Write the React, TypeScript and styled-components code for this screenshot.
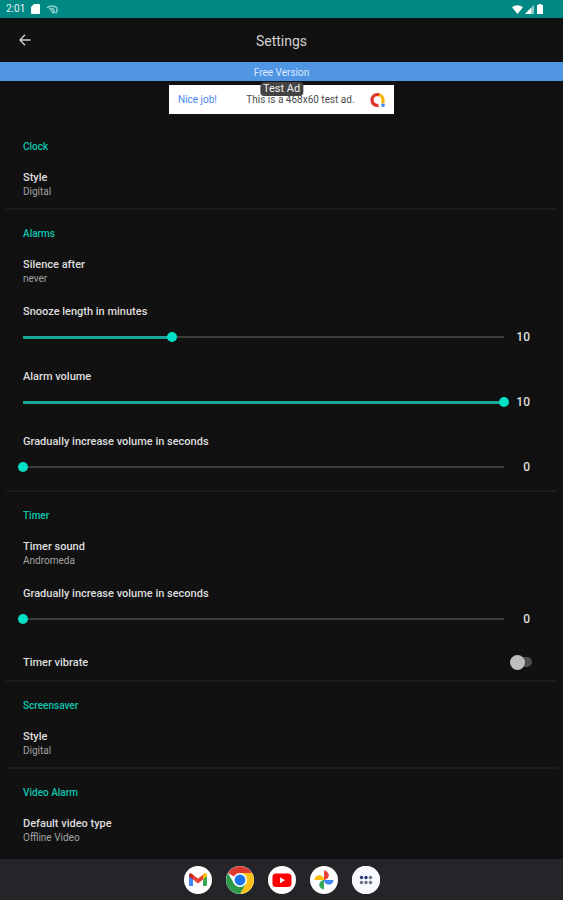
import React, { useId, useState } from "react";
import styled, { createGlobalStyle } from "styled-components";

const GlobalStyle = createGlobalStyle`
  * { box-sizing: border-box; }
  body {
    margin: 0;
    background: #111111;
    color: #dedede;
    font-family: Roboto, "Liberation Sans", sans-serif;
  }
  button, input { font: inherit; color: inherit; }
`;

const Page = styled.div`
  display: flex;
  flex-direction: column;
  min-height: 100vh;
`;

const StatusBar = styled.div`
  display: flex;
  align-items: center;
  justify-content: space-between;
  height: 18px;
  padding: 0 19px 0 6px;
  background: #008885;
  color: #e4f4f3;
  font-size: 10px;
  line-height: 18px;
`;

const StatusGroup = styled.div<{ $gap: number }>`
  display: flex;
  align-items: center;
  gap: ${(p) => p.$gap}px;
  svg { display: block; }
`;

const AppBar = styled.header`
  display: grid;
  grid-template-columns: 50px 1fr 50px;
  align-items: center;
  height: 44px;
  padding-top: 2px;
`;

const BackButton = styled.button`
  display: flex;
  align-items: center;
  justify-content: center;
  height: 40px;
  padding: 0 0 2px;
  border: 0;
  background: none;
  cursor: pointer;
`;

const Title = styled.h1`
  margin: 0;
  font-size: 14px;
  font-weight: 400;
  line-height: 20px;
  text-align: center;
  color: #d2d2d2;
`;

const Banner = styled.div`
  height: 19px;
  background: #5094e4;
  color: #dceaff;
  font-size: 10px;
  line-height: 21px;
  text-align: center;
`;

const Ad = styled.a`
  position: relative;
  display: flex;
  align-items: center;
  justify-content: space-between;
  width: 225px;
  height: 29px;
  margin: 4px auto 0;
  padding: 0 8px 0 9px;
  background: #ffffff;
  color: #4c4c4c;
  font-size: 10px;
  line-height: 14px;
  text-decoration: none;
`;

const AdLead = styled.span`
  color: #4285f4;
  margin-right: 14px;
`;

const AdTag = styled.span`
  position: absolute;
  top: -3px;
  left: 50%;
  transform: translateX(-50%);
  padding: 0 3px;
  border-radius: 4px;
  background: #444444;
  color: #f0f0f0;
  font-size: 11px;
  line-height: 14px;
  white-space: nowrap;
`;

const List = styled.main`
  flex: 1;
  padding-top: 9px;
`;

const Section = styled.section`
  padding-top: 16px;
`;

const Divider = styled.hr`
  height: 2px;
  margin: 0 6px;
  border: 0;
  background: #1c1c1c;
`;

const SectionTitle = styled.h2`
  margin: 0 23px 7px;
  font-size: 10px;
  font-weight: 500;
  line-height: 16px;
  color: #0cc4ae;
`;

const PrefButton = styled.button`
  display: block;
  width: 100%;
  padding: 8px 23px 9px;
  border: 0;
  background: none;
  text-align: left;
  cursor: pointer;
`;

const PrefTitle = styled.span`
  display: block;
  font-size: 11px;
  line-height: 15px;
  font-weight: 500;
`;

const PrefValue = styled.span`
  display: block;
  font-size: 10px;
  line-height: 14px;
  color: #a3a3a3;
`;

const SliderRow = styled.div`
  padding: 9px 33px 12px 23px;
`;

const SliderLine = styled.div`
  display: flex;
  align-items: center;
  height: 22px;
  margin: 7px 0 0 -5px;
`;

const Range = styled.input<{ $fill: number }>`
  appearance: none;
  flex: 1;
  min-width: 0;
  height: 22px;
  margin: 0;
  cursor: pointer;
  background:
    linear-gradient(#19a898, #19a898) 5px center / calc((100% - 10px) * ${(p) => p.$fill}) 3px no-repeat,
    linear-gradient(#3c3c3c, #3c3c3c) 5px center / calc(100% - 10px) 2px no-repeat;
  &::-webkit-slider-thumb {
    appearance: none;
    width: 10px;
    height: 10px;
    border-radius: 50%;
    background: #00e0c6;
  }
`;

const Amount = styled.output`
  width: 21px;
  text-align: right;
  font-size: 12px;
  font-weight: 500;
  line-height: 22px;
`;

const SwitchRow = styled.label`
  display: flex;
  align-items: center;
  justify-content: space-between;
  height: 38px;
  padding: 2px 31px 0 23px;
  cursor: pointer;
`;

const Switch = styled.input`
  appearance: none;
  display: flex;
  align-items: center;
  width: 22px;
  height: 10px;
  margin: 0;
  border-radius: 5px;
  background: #4e4e4e;
  cursor: pointer;
  &::before {
    content: "";
    flex: none;
    width: 15px;
    height: 15px;
    border-radius: 50%;
    background: #bdbdbd;
  }
  &:checked { justify-content: flex-end; }
  &:checked::before { background: #00e0c6; }
`;

const Dock = styled.nav`
  display: flex;
  align-items: center;
  justify-content: center;
  gap: 14px;
  height: 41px;
  background: #242529;
`;

const DockButton = styled.button`
  width: 28px;
  height: 28px;
  padding: 0;
  border: 0;
  border-radius: 50%;
  background: #ffffff;
  overflow: hidden;
  cursor: pointer;
  svg { display: block; }
`;

function Preference({ title, value }: { title: string; value: string }) {
  return (
    <PrefButton type="button">
      <PrefTitle>{title}</PrefTitle>
      <PrefValue>{value}</PrefValue>
    </PrefButton>
  );
}

type SliderProps = { title: string; min?: number; max: number; initial: number };

function SliderPreference({ title, min = 0, max, initial }: SliderProps) {
  const id = useId();
  const [value, setValue] = useState(initial);
  return (
    <SliderRow>
      <PrefTitle as="label" htmlFor={id}>{title}</PrefTitle>
      <SliderLine>
        <Range
          id={id}
          type="range"
          min={min}
          max={max}
          value={value}
          $fill={(value - min) / (max - min)}
          onChange={(e) => setValue(Number(e.target.value))}
        />
        <Amount htmlFor={id}>{value}</Amount>
      </SliderLine>
    </SliderRow>
  );
}

const GmailIcon = () => (
  <svg width="28" height="28" viewBox="0 0 28 28">
    <path d="M5 9.500v9.200c0 .8.5 1.300 1.300 1.300H9v-7.200z" fill="#4285f4" />
    <path d="M23 9.500v9.200c0 .8-.5 1.300-1.300 1.300H19v-7.200z" fill="#34a853" />
    <path d="M19 8.800v4.800l4-3V9c0-2-2-2.700-3.300-1.600z" fill="#fbbc04" />
    <path d="M9 13.600V8.800l5 3.800 5-3.800v4.800l-5 3.800z" fill="#ea4335" />
    <path d="M5 9v1.600l4 3V8.800l-.7-.8C7 6.500 5 7.200 5 9z" fill="#c5221f" />
  </svg>
);

const ChromeIcon = () => (
  <svg width="28" height="28" viewBox="0 0 28 28">
    <path d="M14 14L1.900 7A14 14 0 0 1 26.100 7z" fill="#dd3b30" />
    <path d="M14 7h12.100A14 14 0 0 1 14 28l6-10.500z" fill="#fbc116" />
    <path d="M1.900 7A14 14 0 0 0 14 28l6-10.500L14 14 8 17.500z" fill="#2b9a48" />
    <circle cx="14" cy="14" r="7" fill="#fff" />
    <circle cx="14" cy="14" r="5.400" fill="#1a73e8" />
  </svg>
);

const YouTubeIcon = () => (
  <svg width="28" height="28" viewBox="0 0 28 28">
    <rect x="4.500" y="7.500" width="19" height="13.500" rx="3.500" fill="#ff0000" />
    <path d="M12 11.300v6l5-3z" fill="#fff" />
  </svg>
);

const PhotosIcon = () => (
  <svg width="28" height="28" viewBox="0 0 28 28">
    <path d="M14 4.500a4.750 4.750 0 0 1 0 9.500z" fill="#ea4335" />
    <path d="M23.500 14a4.750 4.750 0 0 1-9.500 0z" fill="#4285f4" />
    <path d="M14 23.500a4.750 4.750 0 0 1 0-9.500z" fill="#34a853" />
    <path d="M4.500 14a4.750 4.750 0 0 1 9.500 0z" fill="#fbbc04" />
  </svg>
);

const AppsIcon = () => (
  <svg width="28" height="28" viewBox="0 0 28 28">
    <rect width="28" height="28" fill="#f8f9ff" />
    <g fill="#2c3a78">
      <circle cx="9.500" cy="11.500" r="1.700" />
      <circle cx="14" cy="11.500" r="1.700" />
    </g>
    <g fill="#6e7186">
      <circle cx="18.500" cy="11.500" r="1.700" />
      <circle cx="9.500" cy="16.500" r="1.700" />
      <circle cx="14" cy="16.500" r="1.700" />
      <circle cx="18.500" cy="16.500" r="1.700" />
    </g>
  </svg>
);

const dockApps = [
  { name: "Gmail", Icon: GmailIcon },
  { name: "Chrome", Icon: ChromeIcon },
  { name: "YouTube", Icon: YouTubeIcon },
  { name: "Photos", Icon: PhotosIcon },
  { name: "All apps", Icon: AppsIcon },
];

export default function App() {
  const [vibrate, setVibrate] = useState(false);
  return (
    <>
      <GlobalStyle />
      <Page>
        <StatusBar>
          <StatusGroup $gap={6}>
            <span>2:01</span>
            <svg width="9" height="10" viewBox="0 0 9 10">
              <path d="M3 0h5a1 1 0 0 1 1 1v8a1 1 0 0 1-1 1H1a1 1 0 0 1-1-1V3z" fill="#fff" />
            </svg>
            <svg width="12" height="9" viewBox="0 0 12 9" fill="none" stroke="#8fd0cc" strokeWidth="1.500">
              <path d="M1 3C3.500.3 8.500.3 11 3v3L9.500 8.400M3 4.500C5 3 8 3.500 8 5.500V8M5 5L7.500 8.400" />
            </svg>
          </StatusGroup>
          <StatusGroup $gap={2}>
            <svg width="11" height="9" viewBox="0 0 11 9">
              <path d="M0 2.200C3-.5 8-.5 11 2.200L5.500 9z" fill="#fff" />
            </svg>
            <svg width="9" height="9" viewBox="0 0 9 9">
              <path d="M9 0v9H0z" fill="#8fd0cc" />
              <path d="M6 3v6H0z" fill="#fff" />
            </svg>
            <svg width="8" height="10" viewBox="0 0 8 10">
              <path d="M2.500 0h3v1H7v9H1V1h1.500z" fill="#fff" />
            </svg>
          </StatusGroup>
        </StatusBar>
        <AppBar>
          <BackButton type="button" aria-label="Back">
            <svg width="12" height="12" viewBox="0 0 12 12" fill="none" stroke="#cfcfcf" strokeWidth="1.400">
              <path d="M11.500 6H1M6 .8L.9 6 6 11.200" />
            </svg>
          </BackButton>
          <Title>Settings</Title>
        </AppBar>
        <Banner>Free Version</Banner>
        <Ad href="#ad">
          <AdLead>Nice job!</AdLead>
          <span>This is a 468x60 test ad.</span>
          <svg width="16" height="16" viewBox="0 0 16 16" fill="none" strokeWidth="3.200">
            <path d="M7.500 2.500A5.500 5.500 0 0 1 13 8v3.500" stroke="#fbb404" />
            <path d="M8.500 13.400A5.500 5.500 0 1 1 7.500 2.500l1.500.2" stroke="#e2362b" />
            <circle cx="13" cy="13.300" r="1.800" fill="#4285f4" />
          </svg>
          <AdTag>Test Ad</AdTag>
        </Ad>
        <List>
          <Section>
            <SectionTitle>Clock</SectionTitle>
            <Preference title="Style" value="Digital" />
          </Section>
          <Divider />
          <Section>
            <SectionTitle>Alarms</SectionTitle>
            <Preference title="Silence after" value="never" />
            <SliderPreference title="Snooze length in minutes" min={1} max={30} initial={10} />
            <SliderPreference title="Alarm volume" max={10} initial={10} />
            <SliderPreference title="Gradually increase volume in seconds" max={60} initial={0} />
          </Section>
          <Divider />
          <Section>
            <SectionTitle>Timer</SectionTitle>
            <Preference title="Timer sound" value="Andromeda" />
            <SliderPreference title="Gradually increase volume in seconds" max={60} initial={0} />
            <SwitchRow>
              <PrefTitle>Timer vibrate</PrefTitle>
              <Switch
                type="checkbox"
                role="switch"
                checked={vibrate}
                onChange={(e) => setVibrate(e.target.checked)}
              />
            </SwitchRow>
          </Section>
          <Divider />
          <Section>
            <SectionTitle>Screensaver</SectionTitle>
            <Preference title="Style" value="Digital" />
          </Section>
          <Divider />
          <Section>
            <SectionTitle>Video Alarm</SectionTitle>
            <Preference title="Default video type" value="Offline Video" />
          </Section>
        </List>
        <Dock aria-label="Apps">
          {dockApps.map(({ name, Icon }) => (
            <DockButton key={name} type="button" aria-label={name}>
              <Icon />
            </DockButton>
          ))}
        </Dock>
      </Page>
    </>
  );
}
